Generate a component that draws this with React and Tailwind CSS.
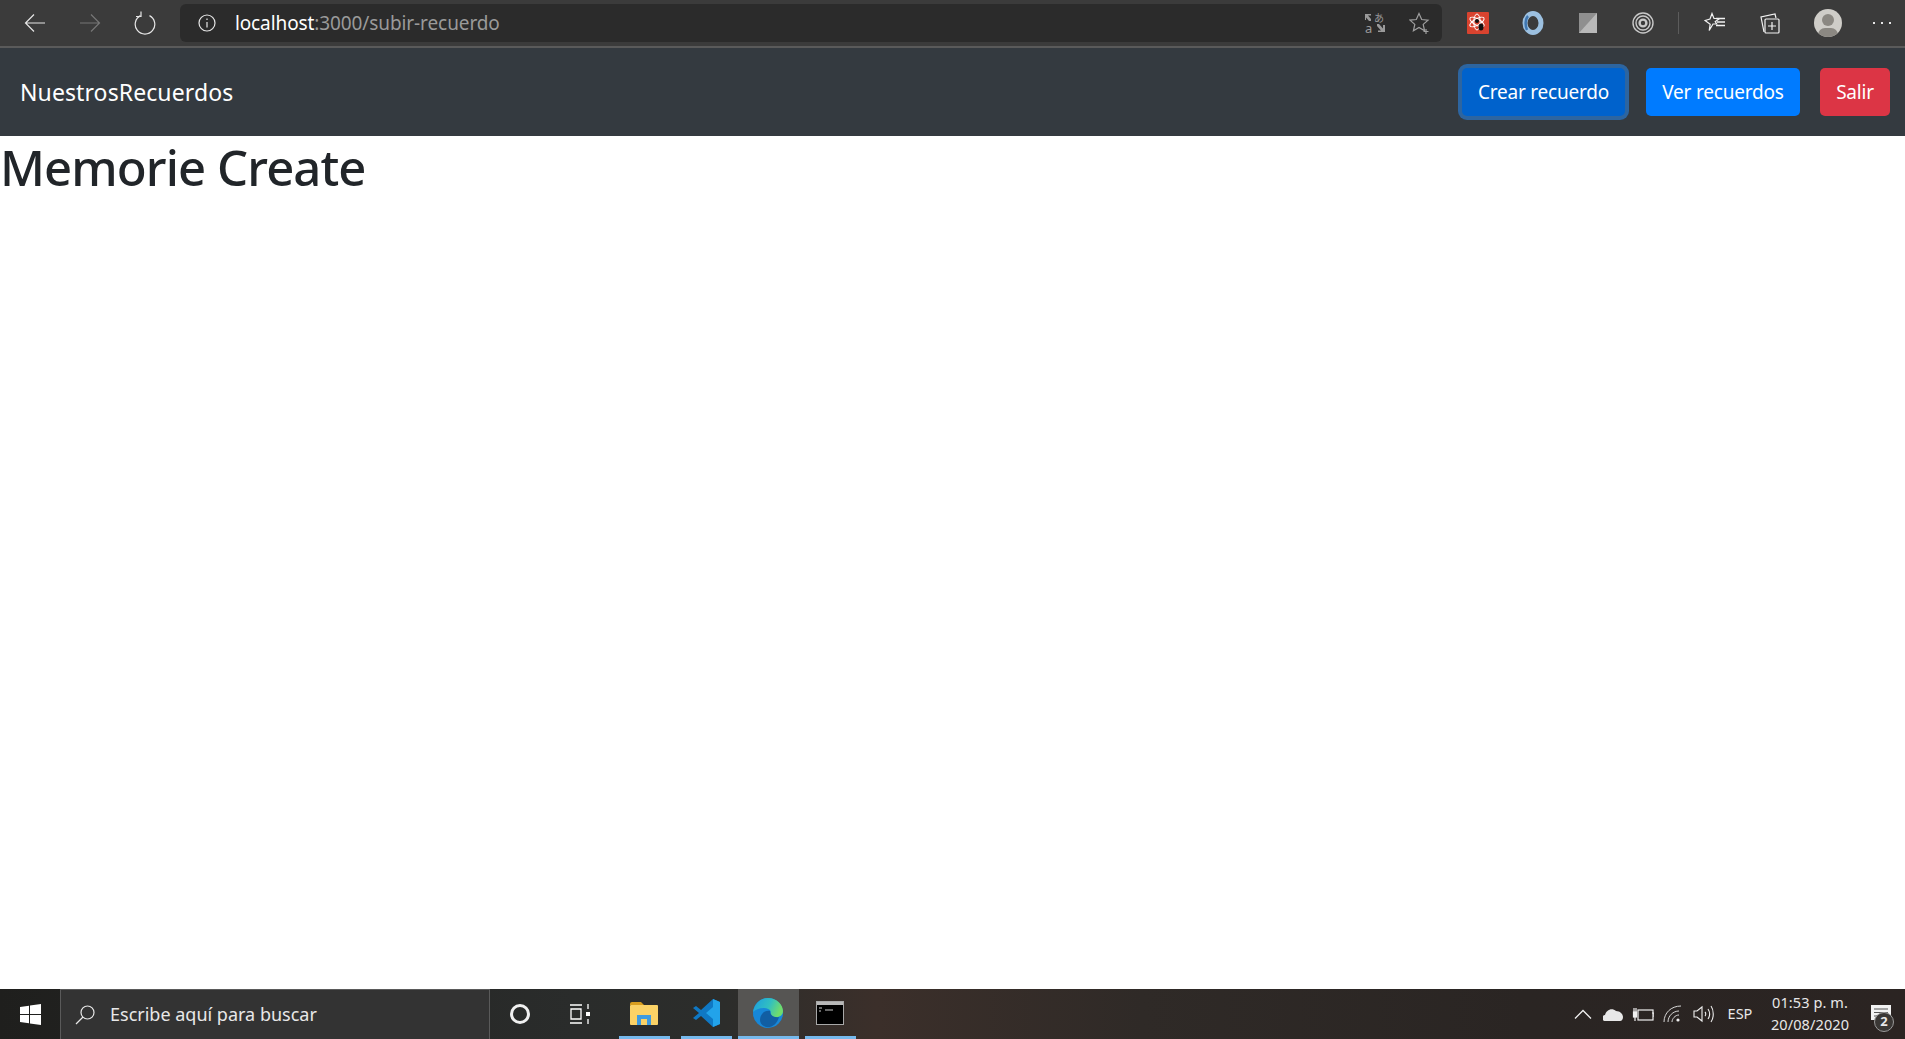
// App.jsx
import React from 'react';

function Slot({ w, children }) {
  return <div className={`flex items-center justify-center shrink-0 h-full ${w}`}>{children}</div>;
}

function BrowserBar() {
  return (
    <div className="flex items-center h-[48px] bg-[#3b3b3b] border-b-2 border-[#5a5a5a] pl-[8px] shrink-0">
      <div className="flex items-center justify-center w-[55px] h-full">
        <svg width="22" height="22" viewBox="0 0 22 22" fill="none" stroke="#e6e6e6" strokeWidth="1.2"><path d="M21 11H1.500M10 2.500 1.500 11l8.500 8.500" /></svg>
      </div>
      <div className="flex items-center justify-center w-[55px] h-full">
        <svg width="22" height="22" viewBox="0 0 22 22" fill="none" stroke="#777" strokeWidth="1.2"><path d="M1 11h19.500M12 2.500l8.500 8.500-8.500 8.500" /></svg>
      </div>
      <div className="flex items-center justify-center w-[55px] h-full">
        <svg width="22" height="24" viewBox="0 0 22 24" fill="none" stroke="#e6e6e6" strokeWidth="1.2"><path d="M6.500 4.600a9.800 9.800 0 1 0 9 0" /><path d="M6 1v5H1" transform="translate(1 -0.5)" /></svg>
      </div>
      <div className="flex items-center h-[38px] w-[1263px] ml-[7px] bg-[#2b2b2b] rounded-[6px] font-['Noto_Sans',sans-serif] text-[19px] tracking-[-0.1px] relative">
        <svg className="ml-[18px]" width="18" height="18" viewBox="0 0 18 18" fill="none" stroke="#e6e6e6" strokeWidth="1.2"><circle cx="9" cy="9" r="8" /><path d="M9 8v5.500M9 4.400v1.600" /></svg>
        <span className="ml-[19px] text-white">localhost<span className="text-[#9a9a9a]">:3000/subir-recuerdo</span></span>
        <div className="ml-auto flex items-center gap-[22px] pr-[11px]">
          <svg width="24" height="24" viewBox="0 0 24 24" fill="#9a9a9a">
            <path d="M2 3h6v1.500H5L8 8v2H6L3 6.500V9H2zM22 21h-7v-1.500h3L14 15v-2h2l4 4.500V14h2z" />
            <text x="11" y="11" fontSize="10" fontFamily="'Noto Sans CJK JP',sans-serif">あ</text>
            <text x="2" y="22" fontSize="13" fontFamily="'Noto Sans',sans-serif">a</text>
          </svg>
          <svg width="22" height="22" viewBox="0 0 22 22" fill="none" stroke="#a0a0a0" strokeWidth="1.2"><path d="M10 1.500l2.700 6 6.300.6-4.800 4.300 1.400 6.400L10 15.500 4.400 18.800l1.400-6.400L1 8.100l6.300-.6z" /><path d="M17 17v5M14.500 19.500h5" /></svg>
        </div>
      </div>
      <div className="flex items-center justify-center w-[55px] ml-[8px] h-full">
        <svg width="22" height="22" viewBox="0 0 22 22"><rect width="22" height="22" rx="1" fill="#d9432f" /><g fill="none" stroke="#fff" strokeWidth="1"><ellipse cx="10" cy="10" rx="8" ry="3.200" transform="rotate(30 10 10)" /><ellipse cx="10" cy="10" rx="8" ry="3.200" transform="rotate(-30 10 10)" /><ellipse cx="10" cy="10" rx="8" ry="3.200" transform="rotate(90 10 10)" /></g><circle cx="10" cy="9" r="2" fill="#111" /><ellipse cx="14" cy="15" rx="2.500" ry="3.500" fill="#111" /></svg>
      </div>
      <div className="flex items-center justify-center w-[55px] h-full">
        <svg width="22" height="24" viewBox="0 0 22 24" fill="none"><ellipse cx="11" cy="12" rx="8" ry="9.500" stroke="#9cc0e0" strokeWidth="5" /><path d="M5 19C3 15 3 8 6 5" stroke="#3f76b0" strokeWidth="2.500" /></svg>
      </div>
      <div className="flex items-center justify-center w-[55px] h-full">
        <svg width="18" height="20" viewBox="0 0 18 20"><rect width="18" height="20" fill="#8f8f8f" /><path d="M18 0v20H0z" fill="#b9b9b9" /></svg>
      </div>
      <div className="flex items-center justify-center w-[55px] h-full">
        <svg width="22" height="22" viewBox="0 0 22 22" fill="none" stroke="#c9c9c9" strokeWidth="1.400"><circle cx="11" cy="11" r="10" /><circle cx="11" cy="11" r="7" /><circle cx="11" cy="11" r="3.400" strokeWidth="2.400" /></svg>
      </div>
      <div className="w-px h-[22px] bg-[#5c5c5c] ml-[8px]"></div>
      <div className="flex items-center justify-center w-[55px] ml-[8px] h-full">
        <svg width="22" height="22" viewBox="0 0 22 22" fill="none" stroke="#f2f2f2" strokeWidth="1.200"><path d="M8 1.500l2 5h5.500l-4.300 3.200 1.500 2.300H9l-3.800 6.500 1-6.300L1 8.500 6 7z" /><path d="M12 6.500h9M13 10h8M12 13.500h9" strokeWidth="1.400" /></svg>
      </div>
      <div className="flex items-center justify-center w-[55px] h-full">
        <svg width="22" height="22" viewBox="0 0 22 22" fill="none" stroke="#f2f2f2" strokeWidth="1.200"><path d="M5 20 2 5l14-3 1 4" /><rect x="6" y="7" width="14" height="14" rx="1" /><path d="M13 10v8M9 14h8" /></svg>
      </div>
      <div className="flex items-center justify-center w-[62px] h-full">
        <div className="relative w-[28px] h-[28px] rounded-full bg-[#cfcdc8] overflow-hidden">
          <div className="absolute left-[8px] top-[5px] w-[12px] h-[12px] rounded-full bg-[#8b8882]"></div>
          <div className="absolute left-[4px] top-[19px] w-[20px] h-[14px] rounded-full bg-[#8b8882]"></div>
        </div>
      </div>
      <div className="flex items-center justify-center gap-[3px] w-[46px] h-full">
        <div className="w-[2px] h-[2px] bg-[#e6e6e6]"></div>
        <div className="w-[2px] h-[2px] bg-[#e6e6e6] mx-[3px]"></div>
        <div className="w-[2px] h-[2px] bg-[#e6e6e6]"></div>
      </div>
    </div>
  );
}

function NavBar() {
  return (
    <nav className="flex items-center justify-between h-[88px] bg-[#343a40] pl-[20px] pr-[15px] shrink-0 font-['Noto_Sans',sans-serif] text-white">
      <span className="text-[23px] tracking-[0.1px]">NuestrosRecuerdos</span>
      <div className="flex items-center">
        <button className="h-[48px] w-[163px] pt-[1px] rounded-[5px] bg-[#0062cc] text-[19px] tracking-[-0.2px] shadow-[0_0_0_4px_rgba(38,143,255,0.5)]">Crear recuerdo</button>
        <button className="h-[48px] w-[154px] pt-[1px] ml-[21px] rounded-[5px] bg-[#007bff] text-[19px] tracking-[-0.2px]">Ver recuerdos</button>
        <button className="h-[48px] w-[70px] pt-[1px] ml-[20px] rounded-[5px] bg-[#dc3545] text-[19px] tracking-[-0.2px]">Salir</button>
      </div>
    </nav>
  );
}

function Taskbar() {
  return (
    <div className="relative flex items-center h-[50px] shrink-0 bg-[linear-gradient(90deg,#1f1f1d_0%,#2a2c2b_30%,#2c2d2b_38%,#3b2f2a_46%,#2f2a27_60%,#2a2523_80%,#2b2422_100%)] font-['Noto_Sans',sans-serif] text-[#e8e8e8]">
      <Slot w="w-[60px]">
        <svg width="21" height="21" viewBox="0 0 21 21" fill="#fff"><path d="M0 3l9-1.300V10H0zM10 1.500 21 0v10H10zM0 11h9v8.300L0 18zM10 11h11v10l-11-1.500z" /></svg>
      </Slot>
      <div className="flex items-center w-[430px] h-full bg-[#333] border border-[#5a5a5a] border-b-0">
        <svg className="ml-[14px]" width="20" height="20" viewBox="0 0 20 20" fill="none" stroke="#e8e8e8" strokeWidth="1.200"><circle cx="12.500" cy="7.500" r="6.500" /><path d="M8 12 1 19" /></svg>
        <span className="ml-[15px] text-[18px] -mt-[1px]">Escribe aquí para buscar</span>
      </div>
      <Slot w="w-[60px]">
        <div className="w-[20px] h-[20px] rounded-full border-[3px] border-[#f0f0f0]"></div>
      </Slot>
      <Slot w="w-[60px]">
        <svg width="20" height="20" viewBox="0 0 20 20" fill="none" stroke="#fff" strokeWidth="1.300"><path d="M0 1h12M0 19h12M1 5h10v10H1zM18 0v5M18 15v5" /><rect x="16" y="8" width="4" height="4" fill="#fff" stroke="none" /></svg>
      </Slot>
      <div className="relative flex items-center justify-center w-[51px] h-full ml-[9px]">
        <svg className="-mt-[2px] -ml-[2px]" width="28" height="24" viewBox="0 0 28 24"><path d="M0 3a2 2 0 0 1 2-2h9l3 3h-14z" fill="#d99e1f" /><rect y="4" width="28" height="20" rx="1" fill="#fbd266" /><path d="M7 24V14h14v10h-4v-6h-6v6z" fill="#3e9be0" /></svg>
        <div className="absolute bottom-0 left-0 right-0 h-[3px] bg-[#76b9ed]"></div>
      </div>
      <div className="relative flex items-center justify-center w-[51px] h-full ml-[11px]">
        <svg className="-mt-[2px] -ml-[2px]" width="30" height="30" viewBox="0 0 30 30"><path d="M22 1 29 4v22l-7 3-12-11-5 4-3-2 6-5-6-5 3-2 5 4z" fill="#0f78c4" /><path d="M22 1 29 4v22l-7 3zM22 9l-7 6 7 6z" fill="#22a3ea" fillRule="evenodd" /></svg>
        <div className="absolute bottom-0 left-0 right-0 h-[3px] bg-[#76b9ed]"></div>
      </div>
      <div className="relative flex items-center justify-center w-[61px] h-full ml-[6px] bg-[#565553]">
        <svg className="-mt-[2px] -ml-[2px]" width="32" height="32" viewBox="0 0 32 32">
          <defs>
            <linearGradient id="edgeTop" x1="0" y1="0" x2="1" y2="0.3">
              <stop offset="0" stopColor="#1b9de2" />
              <stop offset="0.6" stopColor="#32bfc0" />
              <stop offset="1" stopColor="#6fdc6c" />
            </linearGradient>
          </defs>
          <circle cx="16" cy="16" r="15" fill="#1787d8" />
          <path d="M1 15C3 5 10 1 16 1c9 0 15 7 15 13 0 5-5 7-9 6-3-1-4-3-3-5-1-3-4-4-7-4C7 11 3 13 1 15z" fill="url(#edgeTop)" />
          <path d="M8 23c0-6 5-10 10-9 0 4 4 7 9 6-2 7-7 11-13 10-4-1-6-4-6-7z" fill="#115ea3" />
        </svg>
        <div className="absolute bottom-0 left-0 right-0 h-[3px] bg-[#76b9ed]"></div>
      </div>
      <div className="relative flex items-center justify-center w-[51px] h-full ml-[6px]">
        <svg className="-mt-[2px] -ml-[2px]" width="28" height="24" viewBox="0 0 28 24"><rect x="0.500" y="0.500" width="27" height="23" fill="#000" stroke="#a8a8a8" /><rect x="1" y="1" width="26" height="3" fill="#b8b8b8" /><path d="M3 7h3M3 10h2M9 9h8" stroke="#ccc" strokeWidth="1" /></svg>
        <div className="absolute bottom-0 left-0 right-0 h-[3px] bg-[#76b9ed]"></div>
      </div>
      <div className="ml-auto flex items-center h-full pr-[2px]">
        <Slot w="w-[30px]">
          <svg width="18" height="10" viewBox="0 0 18 10" fill="none" stroke="#f0f0f0" strokeWidth="1.300"><path d="M1 9.500 9 1.500l8 8" /></svg>
        </Slot>
        <Slot w="w-[30px]">
          <svg width="21" height="14" viewBox="0 0 21 14"><path d="M3 14a3 3 0 0 1-1-6c1-5 7-8 11-4 4 0 7 3 7 6 0 2-1 4-3 4z" fill="#e8e8e8" /></svg>
        </Slot>
        <Slot w="w-[30px]">
          <svg width="22" height="14" viewBox="0 0 22 14" fill="none" stroke="#f0f0f0" strokeWidth="1.200"><rect x="6" y="3" width="15" height="10" /><path d="M20 6h2v4" /><rect x="1.500" y="5" width="3" height="5" fill="#f0f0f0" /><path d="M2 1v4M4 1v4M3 10v4" /></svg>
        </Slot>
        <Slot w="w-[30px]">
          <svg width="20" height="18" viewBox="0 0 20 18" fill="none" stroke="#d8d8d8" strokeWidth="1"><path d="M1 17C1 8 8 1 18 1M5 17c0-6 5-11 11-11M9 17c0-3 3-7 7-7" /><circle cx="15" cy="15" r="1.600" fill="#f0f0f0" stroke="none" /></svg>
        </Slot>
        <Slot w="w-[30px]">
          <svg width="21" height="18" viewBox="0 0 21 18" fill="none" stroke="#f0f0f0" strokeWidth="1.100"><path d="M1 6h3l5-4v14l-5-4H1zM12 7c1 1 1 3 0 4M15 4c2 3 2 7 0 10M18 1c3 4 3 12 0 16" /></svg>
        </Slot>
        <span className="w-[44px] text-center text-[14.500px]">ESP</span>
        <div className="flex flex-col items-center w-[96px] text-[14.500px] leading-[22px] tracking-[0.1px] -mt-[2px]">
          <span>01:53 p. m.</span>
          <span>20/08/2020</span>
        </div>
        <div className="relative flex items-center justify-center w-[45px] h-full">
          <svg width="20" height="19" viewBox="0 0 20 19"><path d="M0 0h20v15h-9l-4 4v-4H0z" fill="#f2f2f2" /><path d="M3 4h14M3 7.500h14M3 11h10" stroke="#555" strokeWidth="1" /></svg>
          <div className="absolute right-[9px] bottom-[7px] flex items-center justify-center w-[20px] h-[20px] rounded-full bg-[#3a3735] border border-[#9a9a9a] text-[13px] font-bold">2</div>
        </div>
      </div>
    </div>
  );
}

export default function App() {
  return (
    <div className="flex flex-col h-screen overflow-hidden bg-white">
      <BrowserBar />
      <NavBar />
      <main className="flex-1">
        <h1 className="text-[49px] leading-[63px] tracking-[-0.9px] font-medium text-[#212529] font-['Noto_Sans',sans-serif]">Memorie Create</h1>
      </main>
      <Taskbar />
    </div>
  );
}
